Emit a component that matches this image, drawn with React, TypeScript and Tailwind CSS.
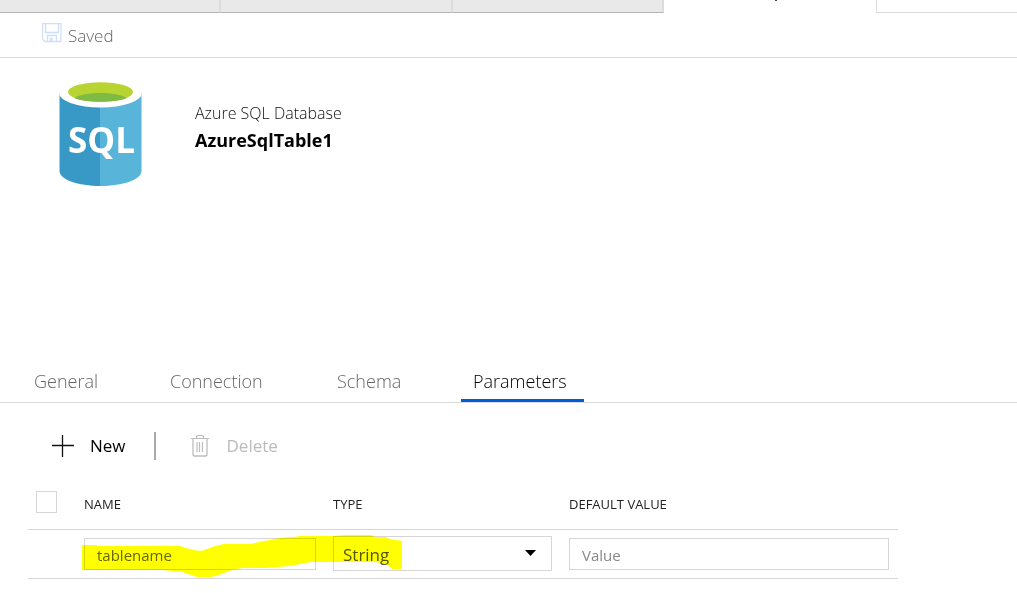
import { useState } from "react";
import clsx from "clsx";

const sections = [
  { name: "General", width: "w-[136px]" },
  { name: "Connection", width: "w-[167px]" },
  { name: "Schema", width: "w-[136px]" },
  { name: "Parameters", width: "w-[123px]" },
];

function SaveIcon() {
  return (
    <svg width="20" height="20" viewBox="0 0 20 20" fill="none" stroke="#cfdff7" aria-hidden="true">
      <path d="M1 .5h18v18H3L.5 16V.5z" strokeWidth="1.3" />
      <path d="M3.5 1v8.500h13V1" strokeWidth="1.3" />
      <path d="M5.500 18v-5.500h9V18M8.500 18v-2.500h1.500V18" strokeWidth="1.3" />
    </svg>
  );
}

function PlusIcon() {
  return (
    <svg width="22" height="22" viewBox="0 0 22 22" stroke="#111" strokeWidth="1.3" aria-hidden="true">
      <path d="M10.500 0v22M0 10.500h22" />
    </svg>
  );
}

function TrashIcon() {
  return (
    <svg width="18" height="22" viewBox="0 0 18 22" fill="none" stroke="#bdbdbd" aria-hidden="true">
      <path d="M0 3.500h18M5.500 3V1.500l1-1h5l1 1V3" strokeWidth="1.2" />
      <path d="M2 4v16l1 1h12l1-1V4" strokeWidth="1.3" />
      <path d="M6 7v10M8.500 7v10M11.500 7v10" strokeWidth="1.2" />
    </svg>
  );
}

function SqlLogo() {
  return (
    <svg width="84" height="106" viewBox="0 0 84 106" role="img" aria-label="SQL">
      <path d="M.5 11v79c0 8.500 18.500 15 41 15V11z" fill="#3999c6" />
      <path d="M41 11v94c23 0 41.500-6.500 41.500-15V11z" fill="#59b4d9" />
      <ellipse cx="41.500" cy="12" rx="41.500" ry="14.500" fill="#fff" />
      <ellipse cx="41.500" cy="11" rx="32.500" ry="9.800" fill="#b8d432" />
      <path d="M15.500 17c5-3.200 15-5 26-5s21 1.800 26 5c-5 2.500-15 3.800-26 3.800s-21-1.300-26-3.800z" fill="#7fba42" />
      <text x="9" y="72" fill="#fff" className="font-['Open_Sans',sans-serif] text-[35px] font-bold">
        SQL
      </text>
    </svg>
  );
}

function OpenTabs() {
  return (
    <div className="flex h-[13px]">
      <div className="w-[221px] border-r-2 border-b border-r-[#dcdcdc] border-b-[#b5b5b5] bg-[#e9e9e9]" />
      <div className="w-[232px] border-r-2 border-b border-r-[#dcdcdc] border-b-[#b5b5b5] bg-[#e9e9e9]" />
      <div className="w-[211px] border-r-2 border-b border-r-[#dcdcdc] border-b-[#b5b5b5] bg-[#e9e9e9]" />
      <div className="w-[212px] pl-[111px]">
        <div className="h-px w-0.5 bg-[#444]" />
      </div>
      <div className="flex-1 border-b border-l border-[#dadada]" />
    </div>
  );
}

function Highlight() {
  return (
    <svg
      className="pointer-events-none absolute top-0 left-0 mix-blend-multiply"
      width="400"
      height="100"
      viewBox="28 480 400 100"
      aria-hidden="true"
    >
      <path
        d="M82 546h15v1h83l6 2 8 2 7 1 6-2 8-3 9-2h27l8-2 21-4 14-1 6-1h33l12-1h26l4 2h10l5 2 12 2v28h-10l-4-4-12-3h-65l-22 4-22 2h-24l-11 2-8 3-8 3-5 1h-14l-9-3-6-2-9-1-10-1H82z"
        fill="#ffff00"
      />
    </svg>
  );
}

function ParameterTable() {
  const [name, setName] = useState("tablename");
  const th = "h-[50px] pt-0.5 text-left text-[13px] font-normal text-[#222]";

  return (
    <div className="relative max-w-[870px]">
      <table className="w-full table-fixed border-collapse">
        <thead>
          <tr className="border-b border-[#d6d6d6]">
            <th className="w-[56px] pb-1 pl-2 text-left">
              <input
                type="checkbox"
                aria-label="Select all"
                className="block h-[22px] w-[21px] appearance-none border border-[#d6d6d6] bg-white"
              />
            </th>
            <th className={clsx(th, "w-[249px]")}>NAME</th>
            <th className={clsx(th, "w-[236px]")}>TYPE</th>
            <th className={th}>DEFAULT VALUE</th>
          </tr>
        </thead>
        <tbody>
          <tr className="h-[49px] border-b border-[#d6d6d6]">
            <td />
            <td className="pr-[17px]">
              <input
                aria-label="Name"
                value={name}
                onChange={(e) => setName(e.target.value)}
                className="block h-8 w-full border border-[#d6d6d6] px-3 pt-0.5 text-[15px] text-[#666]"
              />
            </td>
            <td className="pr-[17px]">
              <div className="relative">
                <select
                  aria-label="Type"
                  className="block h-[35px] w-full appearance-none border border-[#d6d6d6] bg-white px-[9px] pt-0.5 text-[17px] text-[#555]"
                >
                  <option>String</option>
                  <option>Int</option>
                  <option>Bool</option>
                </select>
                <svg className="pointer-events-none absolute top-[14px] right-4" width="11" height="6" aria-hidden="true">
                  <path d="M0 0h11L5.500 6z" />
                </svg>
              </div>
            </td>
            <td className="pr-[9px]">
              <input
                aria-label="Default value"
                placeholder="Value"
                className="block h-8 w-full border border-[#d6d6d6] px-3 pt-0.5 text-[15px] placeholder:text-[#888]"
              />
            </td>
          </tr>
        </tbody>
      </table>
      <Highlight />
    </div>
  );
}

export default function App() {
  const [active, setActive] = useState("Parameters");

  return (
    <main className="min-h-screen bg-white font-['Open_Sans',sans-serif]">
      <OpenTabs />
      <div className="flex h-[45px] items-center gap-1.5 border-b border-[#dadada] pl-[42px] text-[#666]">
        <div className="pb-1">
          <SaveIcon />
        </div>
        <span className="pt-0.5 text-[17px] font-light">Saved</span>
      </div>

      <header className="flex h-[302px] gap-[52px] pt-[23px] pl-[59px]">
        <SqlLogo />
        <div className="pt-5">
          <p className="text-[16px] leading-6 font-light text-[#111]">Azure SQL Database</p>
          <h1 className="text-[18px] leading-[30px] font-bold text-black">AzureSqlTable1</h1>
        </div>
      </header>

      <nav className="flex h-[43px] border-b border-[#dadada] pl-[22px]">
        {sections.map((s) => (
          <button
            key={s.name}
            type="button"
            onClick={() => setActive(s.name)}
            className={clsx(
              "h-[42px] border-b-3 px-3 pt-1 text-left text-[18px] font-light",
              s.width,
              active === s.name ? "border-[#015cda] text-black" : "border-transparent text-[#666]",
            )}
          >
            {s.name}
          </button>
        ))}
      </nav>

      <div className="flex h-[76px] items-center pt-[9px] pl-[52px] text-[17px] font-medium">
        <button type="button" className="flex items-center gap-4 text-black">
          <PlusIcon />
          New
        </button>
        <div className="mr-[35px] ml-7 h-7 w-0.5 bg-[#aaa]" />
        <button type="button" disabled className="flex items-center gap-[18px] text-[#bbb]">
          <TrashIcon />
          Delete
        </button>
      </div>

      <div className="pl-7">
        <ParameterTable />
      </div>
    </main>
  );
}
